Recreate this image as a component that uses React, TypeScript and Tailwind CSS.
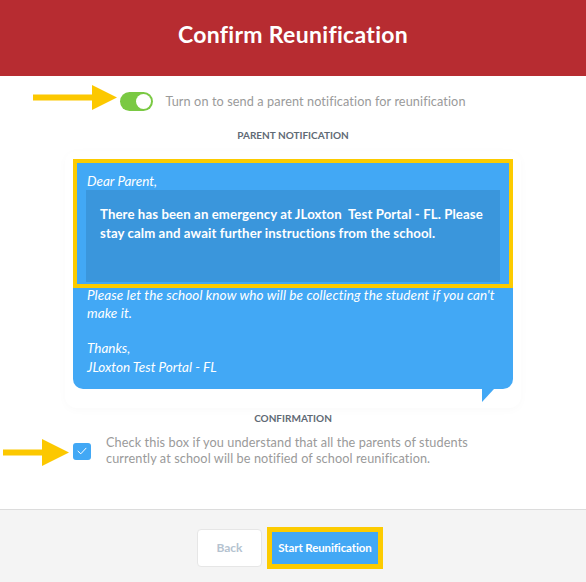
import React from "react";

const font = { fontFamily: "Lato, 'Open Sans', sans-serif" };

function Arrow({ className, w, h }: { className: string; w: number; h: number }) {
  // shaft + triangular head, drawn as a pointer annotation
  const shaft = Math.round(h * 0.24);
  const headW = Math.round(h);
  return (
    <svg className={className} width={w} height={h} viewBox={`0 0 ${w} ${h}`}>
      <rect x={0} y={h / 2 - shaft / 2} width={w - headW + 2} height={shaft} fill="#fcc800" />
      <polygon points={`${w - headW},0 ${w},${h / 2} ${w - headW},${h}`} fill="#fcc800" />
    </svg>
  );
}

const App = () => {
  return (
    <div className="relative flex min-h-[582px] w-full flex-col bg-white" style={font}>
      <header className="flex h-[76px] items-center justify-center bg-[#b72c31] pb-[7px]">
        <h1 className="text-[23px] font-bold tracking-[0.3px] text-white">Confirm Reunification</h1>
      </header>

      <div className="flex flex-1 flex-col">
        <div className="mt-[16px] flex items-center justify-center gap-[12px]">
          <div className="flex h-[19px] w-[33px] items-center justify-end rounded-full bg-[#7ac943] pr-[2px]">
            <div className="h-[15px] w-[15px] rounded-full bg-white" />
          </div>
          <span className="text-[12.7px] tracking-[0.1px] text-[#9a9a9a]">
            Turn on to send a parent notification for reunification
          </span>
        </div>

        <p className="mt-[17px] text-center text-[10px] font-bold text-[#5f6a75]">PARENT NOTIFICATION</p>

        <div className="mx-auto mt-[8px] w-[456px] rounded-[12px] p-[8px] pb-[6px] shadow-[0_2px_10px_rgba(0,0,0,0.025)]">
          <div className="relative">
            <div className="rounded-b-[10px] bg-[#42a8f5] px-[13px] pt-[13px] pb-[12px] text-white">
              <p className="pl-[1px] text-[13.5px] italic leading-[18px]">Dear Parent,</p>
              <div className="h-[92px] bg-[#3a96dc] px-[14px] pt-[15px] text-[13.2px] font-bold leading-[19px] tracking-[0.1px]">
                There has been an emergency at JLoxton&nbsp; Test Portal - FL. Please stay calm and
                await further instructions from the school.
              </div>
              <p className="mt-[4px] pl-[1px] text-[13.5px] italic leading-[18px] tracking-[0.1px]">
                Please let the school know who will be collecting the student if you can't make it.
              </p>
              <p className="mt-[17px] pl-[1px] text-[13.5px] italic leading-[19px]">
                Thanks,
                <br />
                JLoxton Test Portal - FL
              </p>
            </div>
            <div className="ml-[409px] h-0 w-0 border-t-[13px] border-r-[12px] border-t-[#42a8f5] border-r-transparent" />
            <div className="pointer-events-none absolute top-0 right-0 left-0 h-[129px] border-[4px] border-[#fccb00]" />
          </div>
        </div>

        <p className="mt-[3px] text-center text-[10px] font-bold text-[#5f6a75]">CONFIRMATION</p>

        <div className="mx-auto mt-[8px] flex w-[440px] items-center gap-[15px]">
          <div className="mt-[2px] flex h-[17px] w-[18px] shrink-0 items-center justify-center rounded-[3px] bg-[#42a8f5]">
            <svg width="10" height="8" viewBox="0 0 10 8" fill="none">
              <path d="M1 4.2 L3.8 6.8 L9 1.2" stroke="white" strokeWidth="1" strokeLinecap="round" strokeLinejoin="round" />
            </svg>
          </div>
          <p className="w-[370px] text-[12.7px] leading-[16px] tracking-[0.1px] text-[#9a9a9a]">
            Check this box if you understand that all the parents of students currently at school will be
            notified of school reunification.
          </p>
        </div>

        <div className="flex-1" />

        <footer className="flex h-[73px] items-center justify-center gap-[5px] border-t border-[#dcdcdc] bg-[#f4f4f4] pt-[3px] pr-[6px]">
          <button className="h-[38px] w-[65px] rounded-[4px] border border-[#e6e6e6] bg-white text-[12px] font-bold text-[#b5c3d0]">
            Back
          </button>
          <button className="h-[42px] w-[116px] border-[5px] border-[#fccb00] bg-[#42a8f5] text-[11.5px] font-bold tracking-[-0.1px] text-white">
            Start Reunification
          </button>
        </footer>
      </div>

      <Arrow className="absolute top-[85px] left-[33px]" w={84} h={25} />
      <Arrow className="absolute top-[439px] left-[3px]" w={66} h={27} />
    </div>
  );
};

export default App;
